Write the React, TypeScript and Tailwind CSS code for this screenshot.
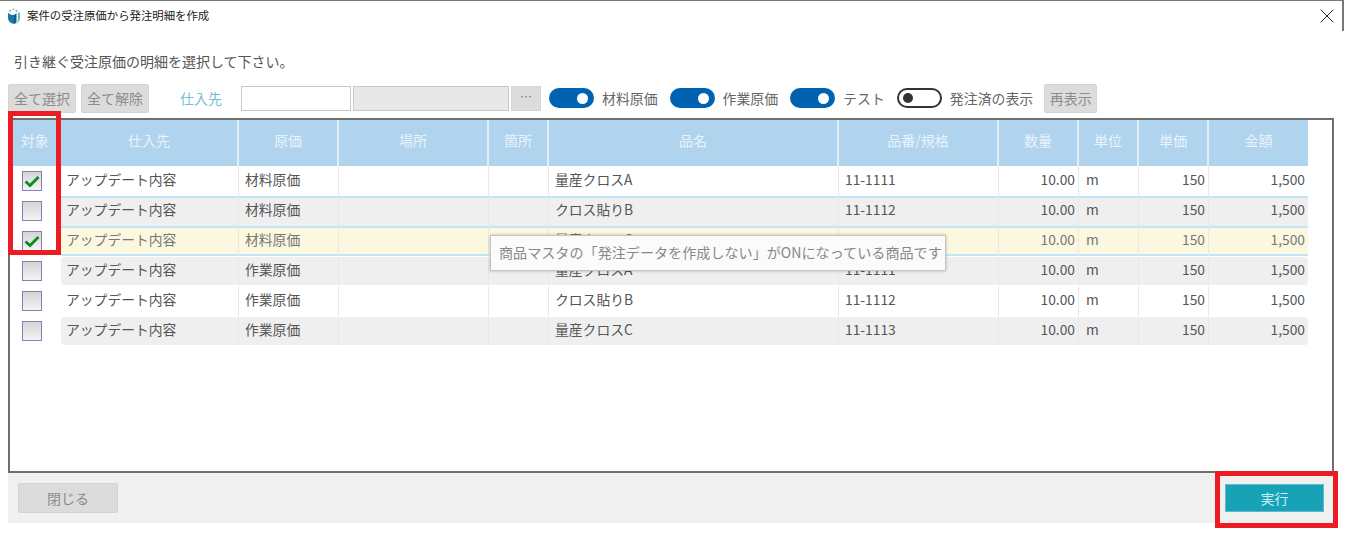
import { X } from "lucide-react";

const gridCols = "grid grid-cols-[51px_178px_100px_150px_60px_290px_160px_80px_60px_70px_99px]";

const headers = ["対象", "仕入先", "原価", "場所", "箇所", "品名", "品番/規格", "数量", "単位", "単価", "金額"];

const rows = [
  { checked: true, kind: "材料原価", name: "量産クロスA", code: "11-1111", bg: "bg-white", extra: "" },
  { checked: false, kind: "材料原価", name: "クロス貼りB", code: "11-1112", bg: "bg-[#efefef]", extra: "shadow-[inset_0_2px_0_#c2e6f7]" },
  { checked: true, kind: "材料原価", name: "量産クロスC", code: "11-1113", bg: "bg-[#fbf8df]", extra: "shadow-[inset_0_2px_0_#c2e6f7,inset_0_-2px_0_#c2e6f7]" },
  { checked: false, kind: "作業原価", name: "量産クロスA", code: "11-1111", bg: "bg-[#efefef]", extra: "rounded-[4px] mt-[1px] mb-[1px]" },
  { checked: false, kind: "作業原価", name: "クロス貼りB", code: "11-1112", bg: "bg-white", extra: "" },
  { checked: false, kind: "作業原価", name: "量産クロスC", code: "11-1113", bg: "bg-[#efefef]", extra: "rounded-[4px] mt-[1px] mb-[1px]" },
];

function AppIcon() {
  return (
    <svg width="14" height="17" viewBox="0 0 14 17">
      <path d="M1 4.5 C2.5 6.5 4.5 7 6 7 L7.5 16 C3.5 15.5 1 13 1 9.5 Z" fill="#1a74ad" />
      <path d="M6 7 C7.5 7 8.5 6.2 9.5 5 L9.5 13 C9.5 14.5 8.8 15.5 7.5 16 C6.5 13 6 10 6 7 Z" fill="#0f5c8f" />
      <path d="M11 4.5 L13 4.5 L13 9.5 C13 12.5 11 15 8.5 16 C10.2 14.5 11 12.5 11 10 Z" fill="#5fc0b8" />
      <circle cx="3" cy="2.8" r="1" fill="#5fb4d8" />
      <circle cx="6.5" cy="1.2" r="0.9" fill="#7cc4e0" />
      <circle cx="9.5" cy="2.8" r="1" fill="#5fb4d8" />
    </svg>
  );
}

function GrayButton({ label, className }: { label: string; className: string }) {
  return (
    <button className={`h-[29px] bg-[#dcdcdc] border border-[#d4d4d4] rounded-[2px] text-[14px] text-[#8c8c8c] flex items-center justify-center whitespace-nowrap ${className}`}>
      {label}
    </button>
  );
}

function Toggle({ on, label, className }: { on: boolean; label: string; className: string }) {
  return (
    <div className={`flex items-center ${className}`}>
      {on ? (
        <span className="w-[45px] h-[20px] rounded-full bg-[#0063b1] flex items-center justify-end pr-[6px]">
          <span className="w-[11px] h-[11px] rounded-full bg-white" />
        </span>
      ) : (
        <span className="w-[45px] h-[20px] rounded-full bg-white border-2 border-[#333] flex items-center pl-[4px]">
          <span className="w-[10px] h-[10px] rounded-full bg-[#333]" />
        </span>
      )}
      <span className="ml-[8px] text-[13.9px] text-[#666] whitespace-nowrap">{label}</span>
    </div>
  );
}

function Checkbox({ checked }: { checked: boolean }) {
  return (
    <span className="w-[20px] h-[20px] border border-[#8581b8] bg-gradient-to-b from-[#d4d4d4] to-[#f4f4f4] flex items-center justify-center">
      {checked && (
        <svg width="16" height="14" viewBox="0 0 16 14">
          <path d="M1.5 7.5 L6 11.5 L14.5 3" fill="none" stroke="#0f8a1f" strokeWidth="2.8" />
        </svg>
      )}
    </span>
  );
}

function Cell({ children, className = "", last = false }: { children?: React.ReactNode; className?: string; last?: boolean }) {
  return (
    <div className={`flex items-center whitespace-nowrap pb-[3px] ${last ? "" : "border-r border-r-[#e8e8e8]"} ${className}`}>
      {children}
    </div>
  );
}

export default function App() {
  return (
    <div className="relative w-[1345px] h-[533px] bg-white overflow-hidden font-['Noto_Sans_CJK_JP','Noto_Sans',sans-serif]">
      {/* タイトルバー */}
      <div className="w-[1344px] h-[31px] border-t border-t-[#777] border-r-2 border-r-[#777] flex items-center pl-[7px]">
        <AppIcon />
        <span className="ml-[6px] text-[11.4px] text-[#222] whitespace-nowrap">案件の受注原価から発注明細を作成</span>
        <X className="ml-auto mr-[3px] -mt-[1px] text-[#222]" size={24} strokeWidth={1} />
      </div>

      <div className="pl-[14px] pt-[19px] h-[53px] text-[14px] leading-[22px] text-[#555]">
        引き継ぐ受注原価の明細を選択して下さい。
      </div>

      {/* ツールバー */}
      <div className="pl-[8px] h-[34px] flex items-start">
        <GrayButton label="全て選択" className="w-[68px]" />
        <GrayButton label="全て解除" className="w-[68px] ml-[5px]" />
        <span className="w-[92px] pl-[31px] h-[29px] leading-[29px] text-[14px] text-[#76bdd8]">仕入先</span>
        <div className="w-[110px] h-[25px] mt-[2px] border border-[#c8c8c8] bg-white" />
        <div className="w-[156px] h-[25px] mt-[2px] ml-[2px] border border-[#c8c8c8] bg-[#e8e8e8]" />
        <div className="w-[30px] h-[25px] mt-[2px] ml-[2px] bg-[#dcdcdc] border border-[#d4d4d4] text-[12px] leading-[20px] text-[#777] text-center">⋯</div>
        <Toggle on label="材料原価" className="ml-[8px] h-[28px]" />
        <Toggle on label="作業原価" className="ml-[12px] h-[28px]" />
        <Toggle on label="テスト" className="ml-[12px] h-[28px]" />
        <Toggle on={false} label="発注済の表示" className="ml-[12px] h-[28px]" />
        <GrayButton label="再表示" className="w-[53px] ml-[11px]" />
      </div>

      {/* 明細グリッド */}
      <div className="ml-[8px] w-[1326px] h-[355px] border-2 border-[#6f6f6f]">
        <div className={`${gridCols} h-[46px] bg-[#b0d4ee] w-[1298px]`}>
          {headers.map((h, i) => (
            <div key={h} className={`flex items-center justify-center pb-[5px] text-[14px] text-[#e9f3fa] ${i < 10 ? "border-r-2 border-r-[#e3edf3]" : ""}`}>
              {h}
            </div>
          ))}
        </div>
        {rows.map((r, i) => (
          <div key={i} className={`${gridCols} h-[30px] w-[1298px] text-[13.8px] ${i === 2 ? "text-[#777]" : "text-[#555]"}`}>
            <div className="flex items-center justify-center pr-[7px] bg-white">
              <Checkbox checked={r.checked} />
            </div>
            <div className={`col-span-10 grid grid-cols-subgrid ${r.bg} ${r.extra}`}>
              <Cell className="pl-[5px]">アップデート内容</Cell>
              <Cell className="pl-[6px]">{r.kind}</Cell>
              <Cell />
              <Cell />
              <Cell className="pl-[6px]">{r.name}</Cell>
              <Cell className="pl-[6px]">{r.code}</Cell>
              <Cell className="justify-end pr-[3px]">10.00</Cell>
              <Cell className="pl-[7px]">m</Cell>
              <Cell className="justify-end pr-[3px]">150</Cell>
              <Cell className="justify-end pr-[3px]" last>1,500</Cell>
            </div>
          </div>
        ))}
      </div>

      {/* フッター */}
      <div className="ml-[8px] w-[1326px] h-[50px] bg-[#f0f0f0] flex items-center justify-between pl-[10px] pr-[10px]">
        <GrayButton label="閉じる" className="w-[100px] !h-[30px]" />
        <button className="w-[99px] h-[28px] bg-[#17a2b8] border border-[#5fb9c8] text-[14px] text-[#c6edf3] flex items-center justify-center">実行</button>
      </div>

      {/* ツールチップ */}
      <div className="absolute left-[490px] top-[235px] w-[456px] h-[36px] bg-[#fbfbfb] border border-[#c4c4c4] shadow-[0_0_3px_rgba(0,0,0,0.25)] flex items-center pl-[8px] text-[14.1px] text-[#888] whitespace-nowrap">
        商品マスタの「発注データを作成しない」がONになっている商品です
      </div>

      {/* 赤枠 */}
      <div className="absolute left-[8px] top-[111px] w-[53px] h-[144px] border-[5px] border-[#ed1c24]" />
      <div className="absolute left-[1215px] top-[471px] w-[123px] h-[57px] border-[5px] border-[#ed1c24]" />
    </div>
  );
}
